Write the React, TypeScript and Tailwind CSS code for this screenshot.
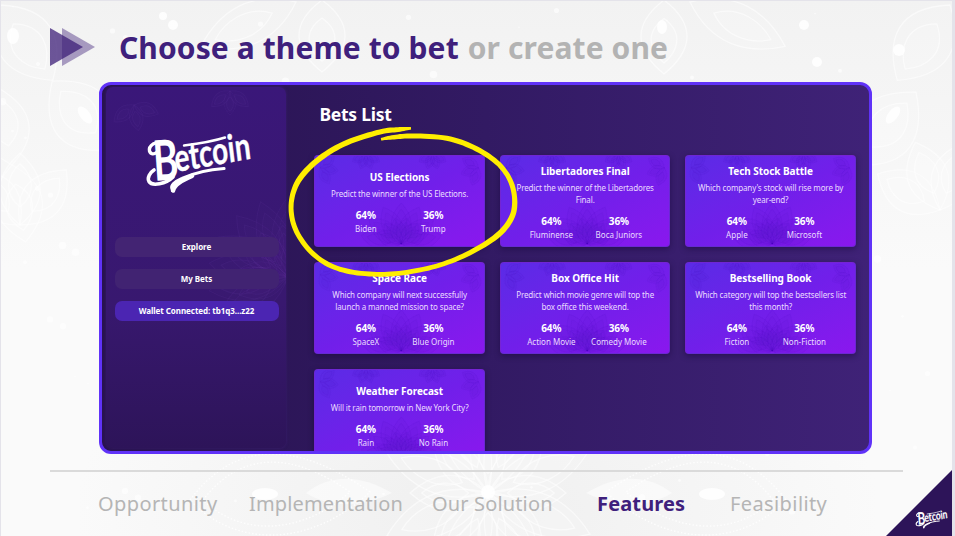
import React from "react";

type Bet = {
  title: string;
  lines: string[];
  a: string;
  b: string;
};

const bets: Bet[] = [
  { title: "US Elections", lines: ["Predict the winner of the US Elections."], a: "Biden", b: "Trump" },
  { title: "Libertadores Final", lines: ["Predict the winner of the Libertadores", "Final."], a: "Fluminense", b: "Boca Juniors" },
  { title: "Tech Stock Battle", lines: ["Which company's stock will rise more by", "year-end?"], a: "Apple", b: "Microsoft" },
  { title: "Space Race", lines: ["Which company will next successfully", "launch a manned mission to space?"], a: "SpaceX", b: "Blue Origin" },
  { title: "Box Office Hit", lines: ["Predict which movie genre will top the", "box office this weekend."], a: "Action Movie", b: "Comedy Movie" },
  { title: "Bestselling Book", lines: ["Which category will top the bestsellers list", "this month?"], a: "Fiction", b: "Non-Fiction" },
  { title: "Weather Forecast", lines: ["Will it rain tomorrow in New York City?"], a: "Rain", b: "No Rain" },
];

type Brush = [number, number, number];

// Centre line of the marker stroke: x, y and brush width.
const marker: Brush[] = [
  [411, 128.3, 2.4], [398, 129.6, 4.8], [380, 131.9, 5.2], [346.7, 142.7, 5.4], [320, 158.3, 5.6], [300, 178.3, 5.6],
  [291.6, 200, 5], [293.3, 223.3, 5], [305, 245, 5], [323.3, 261.7, 5], [346.7, 271, 5], [376.7, 274.3, 4.8],
  [406.7, 272.3, 4.8], [440, 265, 4.8], [470, 252.7, 5], [496.7, 236, 5.6], [511.3, 218.3, 5.6], [514.7, 200, 5.2],
  [510, 180, 5], [496.7, 162.3, 5], [473.3, 147.3, 5.2], [446.7, 138.3, 5], [413, 135.9, 5], [394, 137.2, 4.4], [381, 139.2, 2.6],
];

function spline(pts: Brush[], steps: number): Brush[] {
  const out: Brush[] = [];
  for (let i = 0; i < pts.length - 1; i++) {
    const p = [pts[Math.max(0, i - 1)], pts[i], pts[i + 1], pts[Math.min(pts.length - 1, i + 2)]];
    for (let s = 0; s < steps; s++) {
      const t = s / steps;
      const v = [0, 1, 2].map((k) => {
        const [a, b, c, d] = p.map((q) => q[k]);
        return 0.5 * (2 * b + (c - a) * t + (2 * a - 5 * b + 4 * c - d) * t * t + (3 * b - a - 3 * c + d) * t * t * t);
      });
      out.push([v[0], v[1], v[2]]);
    }
  }
  out.push(pts[pts.length - 1]);
  return out;
}

function brushOutline(pts: Brush[]): string {
  const c = spline(pts, 8);
  const left: string[] = [];
  const right: string[] = [];
  c.forEach(([x, y, w], i) => {
    const a = c[Math.max(0, i - 1)];
    const b = c[Math.min(c.length - 1, i + 1)];
    const len = Math.hypot(b[0] - a[0], b[1] - a[1]) || 1;
    const nx = (-(b[1] - a[1]) / len) * (w / 2);
    const ny = ((b[0] - a[0]) / len) * (w / 2);
    left.push(`${(x + nx).toFixed(1)},${(y + ny).toFixed(1)}`);
    right.unshift(`${(x - nx).toFixed(1)},${(y - ny).toFixed(1)}`);
  });
  return [...left, ...right].join(" ");
}

function Logo({ className }: { className: string }) {
  return (
    <svg viewBox="0 0 116 72" className={className} overflow="visible" fill="none" stroke="#fff" strokeLinecap="round" strokeLinejoin="round">
      <g transform="translate(12.5 55) rotate(-4)" fill="#fff" stroke="none">
        <text fontFamily="Lato, sans-serif" fontWeight="700" fontSize="56" textLength="25" lengthAdjust="spacingAndGlyphs">B</text>
      </g>
      <g transform="translate(34 46) rotate(-10) skewX(-3)" fill="#fff" strokeWidth=".4">
        <text fontFamily="Lato, sans-serif" fontWeight="700" fontSize="38" textLength="77" lengthAdjust="spacingAndGlyphs">etcoin</text>
      </g>
      <path d="M24 16C13 14 6.500 20 7.500 25C8.500 28.500 12 28.500 14.500 26.500" strokeWidth="3.4" />
      <path d="M31 51C24 58 10 60.500 7 55.500C5 51.500 8 46.500 12 44" strokeWidth="3.6" />
      <path d="M42 19.500C54 18 69 16 83 11.500" strokeWidth="2.4" />
      <path d="M31 64.500C27 60 33 55.500 40 52.500C53 46.500 67 43.500 82 42.500" strokeWidth="3.2" />
      <path d="M31 64.500C32 58.500 40 54 50 49.800" strokeWidth="4.6" />
    </svg>
  );
}

function Petals({ cx, cy, count, length, width, start = 0, sweep = 360 }: { cx: number; cy: number; count: number; length: number; width: number; start?: number; sweep?: number }) {
  return (
    <>
      {Array.from({ length: count }, (_, i) => (
        <g key={i} transform={`translate(${cx} ${cy}) rotate(${start + (i * sweep) / count})`}>
          <path d={`M0 0C${-width} ${-length * 0.35} ${-width * 0.8} ${-length * 0.7} 0 ${-length}C${width * 0.8} ${-length * 0.7} ${width} ${-length * 0.35} 0 0Z`} />
          <path d={`M0 ${-length * 0.25}C${-width * 0.6} ${-length * 0.45} ${-width * 0.4} ${-length * 0.7} 0 ${-length * 0.85}C${width * 0.4} ${-length * 0.7} ${width * 0.6} ${-length * 0.45} 0 ${-length * 0.25}Z`} />
        </g>
      ))}
    </>
  );
}

const specks = Array.from({ length: 90 }, (_, i) => ({
  x: (i * 137.5 + (i % 7) * 23) % 950,
  y: (i * 83.3 + (i % 5) * 41) % 534,
  r: 0.8 + (i % 6) * 0.6,
}));

function Backdrop() {
  return (
    <svg viewBox="0 0 955 536" className="absolute inset-0 h-full w-full">
      <defs>
        <radialGradient id="shade" cx="50%" cy="95%" r="42%">
          <stop offset="0" stopColor="#efefef" />
          <stop offset="1" stopColor="#fafafa" />
        </radialGradient>
        <linearGradient id="topShade" x1="0" y1="0" x2="0" y2="1">
          <stop offset="0" stopColor="#f2f2f2" />
          <stop offset=".5" stopColor="#f2f2f2" stopOpacity="0" />
        </linearGradient>
      </defs>
      <rect width="955" height="536" fill="url(#shade)" />
      <rect width="955" height="536" fill="url(#topShade)" />
      <g fill="#fff" fillOpacity=".14" stroke="#fff" strokeOpacity=".55" strokeWidth="1.3">
        <Petals cx={488} cy={493} count={8} length={78} width={26} />
        <Petals cx={488} cy={493} count={8} length={110} width={30} start={22} />
        <Petals cx={664} cy={0} count={1} length={74} width={34} start={180} />
        <Petals cx={322} cy={0} count={1} length={72} width={34} start={180} />
        <Petals cx={690} cy={2} count={1} length={105} width={30} start={115} />
        <Petals cx={296} cy={2} count={1} length={105} width={30} start={245} />
        <Petals cx={0} cy={5} count={1} length={92} width={42} start={145} />
        <Petals cx={950} cy={5} count={1} length={92} width={42} start={215} />
        <Petals cx={110} cy={150} count={1} length={90} width={45} start={-40} />
        <Petals cx={855} cy={165} count={1} length={95} width={45} start={40} />
        <Petals cx={12} cy={165} count={2} length={78} width={35} start={-10} />
        <Petals cx={940} cy={210} count={3} length={72} width={30} start={-60} sweep={120} />
        <Petals cx={20} cy={225} count={3} length={72} width={30} start={-40} sweep={120} />
      </g>
      <g fill="none" stroke="#fff" strokeOpacity=".8" strokeWidth="1.4" strokeDasharray="1.5 2">
        <path d="M190 500C235 440 295 440 370 492C310 548 235 548 190 500Z" />
        <path d="M203 500C240 452 290 450 350 492C300 536 240 536 203 500Z" />
        <path d="M786 500C740 440 682 440 606 492C666 548 740 548 786 500Z" />
        <path d="M773 500C736 452 686 450 626 492C676 536 736 536 773 500Z" />
      </g>
      <g fill="#fff" fillOpacity=".85">
        <path d="M306 493C330 474 360 474 392 493C360 508 330 508 306 493Z" fillOpacity=".5" />
        <path d="M672 493C648 474 618 474 586 493C618 508 648 508 672 493Z" fillOpacity=".5" />
        <ellipse cx="265" cy="494" rx="13" ry="6" />
        <ellipse cx="712" cy="494" rx="13" ry="6" />
        <ellipse cx="85" cy="115" rx="5" ry="10" transform="rotate(-38 85 115)" />
        <ellipse cx="893" cy="115" rx="5" ry="10" transform="rotate(38 893 115)" />
        <ellipse cx="13" cy="36" rx="6" ry="8" />
        <ellipse cx="662" cy="27" rx="5" ry="7" />
        <circle cx="488" cy="492" r="7" />
        <circle cx="804" cy="25" r="5" />
        <circle cx="817" cy="62" r="5" />
        <circle cx="899" cy="50" r="6" />
        <circle cx="173" cy="25" r="5" />
        <circle cx="163" cy="16" r="4" />
        {specks.map((s, i) => (
          <circle key={i} cx={s.x} cy={s.y} r={s.r} fillOpacity=".6" />
        ))}
      </g>
    </svg>
  );
}

function CardArt() {
  return (
    <svg viewBox="0 0 170 92" className="absolute inset-0 h-full w-full" fill="#4a16b8" fillOpacity=".045" stroke="#4a16b8" strokeOpacity=".1" strokeWidth=".7">
      <Petals cx={87} cy={90} count={7} length={42} width={15} start={-78} sweep={182} />
      <Petals cx={87} cy={90} count={6} length={27} width={12} start={-65} sweep={156} />
      <Petals cx={51} cy={-2} count={4} length={16} width={7} start={120} sweep={160} />
      <Petals cx={119} cy={-2} count={4} length={16} width={7} start={120} sweep={160} />
      <Petals cx={4} cy={12} count={3} length={19} width={8} start={50} sweep={150} />
      <Petals cx={166} cy={12} count={3} length={19} width={8} start={200} sweep={150} />
    </svg>
  );
}

function Option({ pct, label }: { pct: string; label: string }) {
  return (
    <div className="flex w-[67.5px] flex-col items-center whitespace-nowrap">
      <div className="text-[10px] leading-[13px] font-bold text-white">{pct}</div>
      <div className="text-[8px] leading-[13px] text-[#eadcff]">{label}</div>
    </div>
  );
}

function Card({ bet }: { bet: Bet }) {
  return (
    <div className="relative flex h-[92px] flex-col items-center justify-center overflow-hidden rounded-[4px] border border-[#6a2cc4]/60 bg-linear-to-br from-[#5a2be6] via-[#711fea] to-[#8a17ee] shadow-[0_2px_6px_rgba(20,5,50,.45)]">
      <CardArt />
      <div className="relative flex flex-col items-center pt-[2px] whitespace-nowrap">
        <div className="text-[10px] leading-[14px] font-bold tracking-[-0.06px] text-white">{bet.title}</div>
        <div className="mt-1 flex flex-col items-center">
          {bet.lines.map((l) => (
            <div key={l} className="text-[8px] leading-[12px] tracking-[-0.14px] text-[#eadcff]">{l}</div>
          ))}
        </div>
        <div className="mt-[9.5px] flex">
          <Option pct="64%" label={bet.a} />
          <Option pct="36%" label={bet.b} />
        </div>
      </div>
    </div>
  );
}

function Sidebar() {
  return (
    <div className="relative flex h-[361px] w-[180px] shrink-0 flex-col items-center overflow-hidden rounded-[7px] bg-linear-to-b from-[#3a1779] via-[#38186f] via-60% to-[#2d1459] pt-[39px] shadow-[0_0_3px_rgba(70,35,130,.6)]">
      <svg viewBox="0 0 180 361" className="absolute inset-0 h-full w-full" fill="#5a2ba0" fillOpacity=".04" stroke="#6a42a8" strokeOpacity=".13" strokeWidth="1">
        <Petals cx={182} cy={190} count={7} length={80} width={24} start={-120} sweep={140} />
        <Petals cx={182} cy={190} count={5} length={52} width={18} start={-110} sweep={130} />
        <Petals cx={28} cy={18} count={3} length={26} width={10} start={110} sweep={180} />
        <Petals cx={124} cy={4} count={3} length={24} width={9} start={130} sweep={150} />
      </svg>
      <Logo className="relative ml-[7px] h-[72px] w-[116px] shrink-0" />
      <div className="relative mt-[39.4px] ml-px flex w-[164px] flex-col gap-3 text-center text-[8px] leading-5 font-bold tracking-[-0.05px] text-white">
        <div className="h-5 rounded-[7px] bg-[#432473]">Explore</div>
        <div className="h-5 rounded-[7px] bg-[#412372]">My Bets</div>
        <div className="h-5 rounded-[7px] bg-[#4b25b2]">Wallet Connected: tb1q3...z22</div>
      </div>
    </div>
  );
}

export default function App() {
  return (
    <div className="relative h-[536px] w-[955px] overflow-hidden bg-[#fafafa] font-['Noto_Sans',sans-serif]">
      <Backdrop />
      <div className="relative flex h-full flex-col">
        <header className="flex h-[82px] shrink-0 items-center pl-[50px]">
          <svg viewBox="0 0 45 38" className="mt-[12px] h-[38px] w-[45px]" fill="#3b1d77">
            <path d="M12 0L45 19L12 38Z" fillOpacity=".42" />
            <path d="M0 0L33 19L0 38Z" fillOpacity=".74" />
          </svg>
          <h1 className="mt-[13px] ml-6 flex gap-[9px] text-[30px] leading-10 font-bold whitespace-nowrap text-[#3f207c]">
            <span className="tracking-[0.1px]">Choose a theme to bet</span>
            <span className="tracking-[0.1px] text-[#b3b3b3]">or create one</span>
          </h1>
        </header>

        <section className="ml-[99px] flex h-[372px] w-[773px] shrink-0 overflow-hidden rounded-[12px] border-[3px] border-[#6032f8] bg-linear-to-r from-[#28134f] via-[#321a63] to-[#3f2277] pt-[2px] pl-1">
          <Sidebar />
          <main className="ml-[28.4px] flex flex-col">
            <h2 className="mt-[15px] ml-[5px] text-[17.5px] leading-6 font-bold tracking-[-0.25px] text-white">Bets List</h2>
            <div className="mt-[29.4px] grid grid-cols-[170.5px_170.5px_170.5px] gap-[15px]">
              {bets.map((b) => (
                <Card key={b.title} bet={b} />
              ))}
            </div>
          </main>
        </section>

        <div className="mt-4 ml-[50px] h-[2px] w-[853px] shrink-0 bg-[#dadada]" />

        <nav className="mt-4 flex h-8 items-center pl-[98px] text-[20px] leading-8 tracking-[0.15px] whitespace-nowrap text-[#b5b5b5]">
          <span className="w-[151px] tracking-[0.4px]">Opportunity</span>
          <span className="w-[183px]">Implementation</span>
          <span className="w-[165px]">Our Solution</span>
          <span className="w-[133px] font-bold text-[#3f207c]">Features</span>
          <span className="tracking-[0.4px]">Feasibility</span>
        </nav>
      </div>

      <svg viewBox="0 0 955 536" className="pointer-events-none absolute inset-0 h-full w-full">
        <polygon points={brushOutline(marker)} fill="#ffee00" />
        <polygon points="952,470 952,536 886,536" fill="#2d1459" />
      </svg>
      <Logo className="absolute top-[508px] left-[914px] h-[22px] w-[36px]" />
      <div className="absolute inset-0 border-t border-r-[3px] border-l border-[#e4e3ea]" />
    </div>
  );
}
